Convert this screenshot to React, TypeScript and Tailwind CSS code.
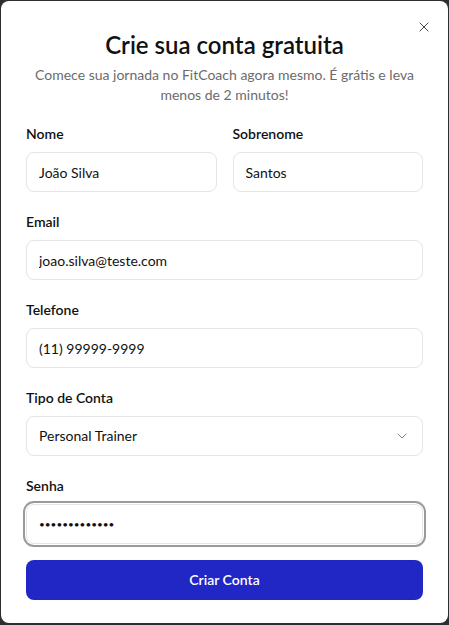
import React from 'react';
import { ChevronDown, X } from 'lucide-react';

const Field: React.FC<{ label: string; children: React.ReactNode }> = ({ label, children }) => (
  <div className="flex flex-col gap-2">
    <label className="text-sm font-semibold leading-5 text-[#111]">{label}</label>
    {children}
  </div>
);

const inputCls =
  'h-10 w-full rounded-lg border border-[#e5e5e5] bg-white px-3 text-sm text-[#111] outline-none';

export default function App() {
  return (
    <div className="h-[625px] w-[449px] bg-[#2e2e2e] p-px" style={{ fontFamily: 'Lato, "Noto Sans", sans-serif' }}>
      <div className="relative h-[622px] w-[447px] rounded-lg bg-white px-[25px] pt-[28px]">
        {/* close button */}
        <button className="absolute right-[16px] top-[18px] text-[#444]">
          <X size={16} strokeWidth={1.5} />
        </button>

        <h2 className="text-center text-2xl font-semibold leading-8 text-[#111]">Crie sua conta gratuita</h2>
        <p className="mx-auto mt-1 text-center text-sm leading-5 text-[#6b6b6b]">
          Comece sua jornada no FitCoach agora mesmo. É grátis e leva menos de 2 minutos!
        </p>

        <form className="mt-[19px] flex flex-col gap-5">
          <div className="grid grid-cols-2 gap-4">
            <Field label="Nome">
              <input className={inputCls} defaultValue="João Silva" />
            </Field>
            <Field label="Sobrenome">
              <input className={inputCls} defaultValue="Santos" />
            </Field>
          </div>
          <Field label="Email">
            <input className={inputCls} defaultValue="joao.silva@teste.com" />
          </Field>
          <Field label="Telefone">
            <input className={inputCls} defaultValue="(11) 99999-9999" />
          </Field>
          <Field label="Tipo de Conta">
            <div className={`${inputCls} flex items-center justify-between`}>
              <span>Personal Trainer</span>
              <ChevronDown size={16} strokeWidth={1.5} className="text-[#888]" />
            </div>
          </Field>
          <Field label="Senha">
            <input
              type="password"
              className="h-10 w-full rounded-lg border border-[#e5e5e5] bg-white px-3 text-[10px] text-[#111] outline-none ring-2 ring-[#9a9a9a] ring-offset-1"
              defaultValue="senhasegura12"
            />
          </Field>
        </form>

        <button className="mt-4 h-10 w-full rounded-lg bg-[#2127c4] text-sm font-semibold text-white">
          Criar Conta
        </button>
      </div>
    </div>
  );
}
